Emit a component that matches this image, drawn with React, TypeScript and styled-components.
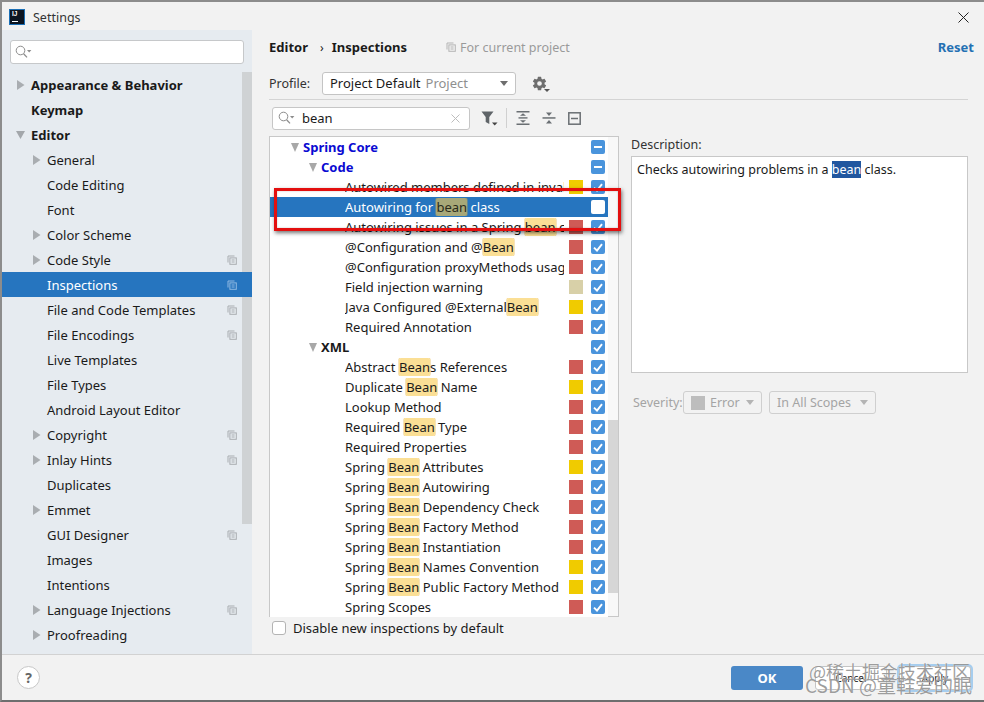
import React from "react";
import styled, { createGlobalStyle } from "styled-components";
import { IoSettingsSharp } from "react-icons/io5";

const GlobalStyle = createGlobalStyle`
  html, body {
    margin: 0;
    padding: 0;
    background: #f2f2f2;
  }
  * {
    box-sizing: border-box;
  }
`;

const Window = styled.div`
  position: relative;
  width: 984px;
  height: 702px;
  display: flex;
  flex-direction: column;
  overflow: hidden;
  background: #f2f2f2;
  border-top: 2px solid #8c8c8c;
  border-left: 2px solid #8c8c8c;
  border-bottom: 2px solid #6e6e6e;
  font-family: "Noto Sans", "Open Sans", sans-serif;
  font-size: 13px;
  color: #1a1a1a;
`;

const TitleBar = styled.div`
  height: 28px;
  flex: none;
  display: flex;
  align-items: center;
  padding: 2px 15px 0 7px;
  gap: 8px;
  font-size: 12.5px;
  color: #333;
`;

const Logo = styled.div`
  width: 16px;
  height: 16px;
  background: #0d1520;
  border: 1px solid #1c6fb5;
  color: #fff;
  font-family: "Liberation Sans", sans-serif;
  font-size: 6.5px;
  font-weight: 700;
  line-height: 8px;
  padding-left: 2px;
  position: relative;
  &::after {
    content: "";
    position: absolute;
    left: 2px;
    bottom: 2px;
    width: 6px;
    height: 1px;
    background: #fff;
  }
`;

const TitleText = styled.span`
  flex: 1;
`;

const Body = styled.div`
  flex: 1;
  display: flex;
  min-height: 0;
`;

const Sidebar = styled.aside`
  position: relative;
  width: 250px;
  flex: none;
  background: #e6ebf0;
  padding-top: 10px;
`;

const SidebarSearch = styled.div`
  height: 24px;
  margin: 0 8px 8px;
  background: #fff;
  border: 1px solid #c6c8ca;
  border-radius: 3px;
  display: flex;
  align-items: center;
  padding-left: 4px;
`;

const SidebarThumb = styled.div`
  position: absolute;
  top: 42px;
  right: 0;
  width: 10px;
  height: 452px;
  background: #cfd2d4;
`;

const NavRow = styled.div<{ $depth: number; $selected?: boolean; $bold?: boolean }>`
  position: relative;
  z-index: 1;
  height: 25px;
  display: flex;
  align-items: center;
  padding-left: ${(p) => (p.$depth === 0 ? 14 : 30)}px;
  padding-right: 15px;
  font-weight: ${(p) => (p.$bold ? 700 : 400)};
  background: ${(p) => (p.$selected ? "#2675bf" : "transparent")};
  color: ${(p) => (p.$selected ? "#fff" : "#1a1a1a")};
`;

const ArrowSlot = styled.span`
  width: 15px;
  flex: none;
  display: flex;
  align-items: center;
`;

const NavLabel = styled.span`
  flex: 1;
  white-space: nowrap;
`;

const Main = styled.main`
  flex: 1;
  min-width: 0;
  padding: 0 10px 0 17px;
  display: flex;
  flex-direction: column;
`;

const Header = styled.div`
  height: 34px;
  flex: none;
  display: flex;
  align-items: center;
  font-weight: 700;
  font-size: 13px;
`;

const Crumb = styled.span`
  margin: 0 8px 0 12px;
  font-weight: 400;
  font-size: 12px;
`;

const Scope = styled.span`
  display: flex;
  align-items: center;
  gap: 4px;
  margin-left: 39px;
  font-weight: 400;
  color: #9a9a9a;
  font-size: 12.5px;
`;

const Reset = styled.a`
  margin-left: auto;
  color: #2470b3;
`;

const ProfileRow = styled.div`
  height: 36px;
  flex: none;
  margin-right: 6px;
  padding-top: 3px;
  display: flex;
  align-items: center;
  border-bottom: 1px solid #d4d4d4;
`;

const ProfileLabel = styled.span`
  width: 53px;
  color: #333;
  font-size: 12.5px;
`;

const Combo = styled.div<{ $width: number; $disabled?: boolean }>`
  width: ${(p) => p.$width}px;
  height: 23px;
  display: flex;
  align-items: center;
  padding: 0 7px;
  gap: 5px;
  background: ${(p) => (p.$disabled ? "transparent" : "#fff")};
  border: 1px solid ${(p) => (p.$disabled ? "#cfcfcf" : "#c4c4c4")};
  border-radius: 3px;
  color: ${(p) => (p.$disabled ? "#a4a4a4" : "#1a1a1a")};
  white-space: nowrap;
`;

const ComboHint = styled.span`
  color: #8f8f8f;
`;

const ComboCaret = styled.span<{ $disabled?: boolean }>`
  margin-left: auto;
  width: 0;
  height: 0;
  border-left: 4.5px solid transparent;
  border-right: 4.5px solid transparent;
  border-top: 5px solid ${(p) => (p.$disabled ? "#b4b4b4" : "#6e6e6e")};
`;

const GearButton = styled.span`
  position: relative;
  margin-left: 16px;
  display: flex;
  color: #6e6e6e;
  &::after {
    content: "";
    position: absolute;
    right: -3px;
    bottom: -1px;
    border-left: 3px solid transparent;
    border-right: 3px solid transparent;
    border-top: 3px solid #555;
  }
`;

const Toolbar = styled.div`
  height: 36px;
  flex: none;
  display: flex;
  align-items: center;
  padding-left: 3px;
`;

const FilterInput = styled.div`
  width: 198px;
  height: 23px;
  display: flex;
  align-items: center;
  padding: 0 9px 0 5px;
  background: #fff;
  border: 1px solid #c6c6c6;
  border-radius: 3px;
`;

const FilterValue = styled.span`
  flex: 1;
  margin-left: 7px;
`;

const ToolIcon = styled.span<{ $gap: number }>`
  position: relative;
  display: flex;
  margin-left: ${(p) => p.$gap}px;
`;

const ToolSeparator = styled.span`
  width: 1px;
  height: 20px;
  margin-left: 8px;
  background: #d0d0d0;
`;

const Panels = styled.div`
  display: flex;
  gap: 12px;
`;

const TreePanel = styled.div`
  position: relative;
  width: 350px;
  height: 481px;
  flex: none;
  background: #f8f8f8;
  border: 1px solid #c8c8c8;
  border-bottom-width: 1px;
  border-right-width: 1px;
`;

const TreeThumb = styled.div`
  position: absolute;
  top: 283px;
  right: 0;
  width: 10px;
  height: 173px;
  background: #d6d6d6;
`;

const TreeRows = styled.div`
  width: 338px;
  background: #fff;
`;

const TreeRow = styled.div<{ $indent: number; $selected?: boolean }>`
  height: 20px;
  display: flex;
  align-items: center;
  padding: 0 3px 0 ${(p) => p.$indent}px;
  background: ${(p) => (p.$selected ? "#2675bf" : "transparent")};
  color: ${(p) => (p.$selected ? "#fff" : "#1a1a1a")};
`;

const TreeArrow = styled.span<{ $small?: boolean }>`
  width: 0;
  height: 0;
  flex: none;
  margin-right: 4px;
  border-left: 4.5px solid transparent;
  border-right: 4.5px solid transparent;
  border-top: 9px solid #a8a8a8;
`;

const TreeText = styled.span<{ $tone?: "group" | "blue" }>`
  flex: 1;
  min-width: 0;
  overflow: hidden;
  white-space: nowrap;
  font-weight: ${(p) => (p.$tone ? 700 : 400)};
  color: ${(p) => (p.$tone === "blue" ? "#0a0ad2" : "inherit")};
`;

const Match = styled.span<{ $selected?: boolean }>`
  background: ${(p) => (p.$selected ? "#a8a878" : "#fbdf95")};
  color: ${(p) => (p.$selected ? "#2a2a1a" : "inherit")};
  border-radius: 2px;
  box-shadow: 0 0 0 0.5px ${(p) => (p.$selected ? "#9a9a70" : "#edc878")};
`;

const Swatch = styled.span<{ $color?: string }>`
  width: 14px;
  height: 14px;
  flex: none;
  margin-left: 5px;
  background: ${(p) => p.$color || "transparent"};
`;

const Check = styled.span<{ $state: "on" | "off" | "mixed" }>`
  width: 14px;
  height: 14px;
  flex: none;
  margin-left: 8px;
  display: flex;
  align-items: center;
  justify-content: center;
  border-radius: 2px;
  background: ${(p) => (p.$state === "off" ? "#fff" : "#4a94dc")};
`;

const DescColumn = styled.div`
  flex: 1;
  min-width: 0;
  margin-right: 6px;
`;

const DescLabel = styled.div`
  height: 20px;
  line-height: 18px;
  font-size: 12.5px;
  color: #333;
`;

const DescBox = styled.div`
  height: 217px;
  padding: 4px 5px;
  background: #fff;
  border: 1px solid #c8c8c8;
  font-size: 12.5px;
`;

const DescMatch = styled.span`
  background: #21579f;
  color: #fff;
`;

const SeverityRow = styled.div`
  margin-top: 18px;
  display: flex;
  align-items: center;
  color: #a4a4a4;
  font-size: 12.5px;
`;

const SeverityLabel = styled.span`
  width: 52px;
  padding-left: 2px;
`;

const SeverityCombos = styled.div`
  display: flex;
  gap: 7px;
`;

const GreySwatch = styled.span`
  width: 14px;
  height: 14px;
  background: #bdbdbd;
`;

const NewInspections = styled.label`
  height: 22px;
  margin-top: 0;
  padding: 0 0 0 3px;
  display: flex;
  align-items: center;
  gap: 7px;
  transform: none;
`;

const EmptyBox = styled.span`
  width: 14px;
  height: 14px;
  background: #fff;
  border: 1px solid #b4b4b4;
  border-radius: 3px;
`;

const Footer = styled.footer`
  height: 46px;
  flex: none;
  display: flex;
  align-items: center;
  padding: 0 13px 0 15px;
  border-top: 1px solid #d2d2d2;
`;

const HelpButton = styled.span`
  width: 23px;
  height: 23px;
  display: flex;
  align-items: center;
  justify-content: center;
  background: #fff;
  border: 1px solid #c8c8c8;
  border-radius: 50%;
  color: #666;
  font-weight: 700;
  font-size: 14px;
`;

const FooterButtons = styled.div`
  margin-left: auto;
  display: flex;
  align-items: center;
  gap: 12px;
`;

const DialogButton = styled.button<{ $kind?: "primary" | "focus" }>`
  width: 72px;
  height: 24px;
  padding: 0;
  font: inherit;
  font-size: ${(p) => (p.$kind === "primary" ? "13px" : "10px")};
  font-weight: ${(p) => (p.$kind === "primary" ? 700 : 400)};
  color: ${(p) => (p.$kind === "primary" ? "#fff" : "#222")};
  background: ${(p) => (p.$kind === "primary" ? "#4a88c7" : "#fff")};
  border: ${(p) => (p.$kind === "primary" ? "0" : "1px solid #c4c4c4")};
  border-radius: 3px;
  box-shadow: ${(p) => (p.$kind === "focus" ? "0 0 0 2px #a6cdee" : "none")};
`;

const Callout = styled.div`
  position: absolute;
  left: 272px;
  top: 186px;
  width: 347px;
  height: 43px;
  border: 3px solid #e30f0f;
  box-shadow: 1px 2px 4px rgba(0, 0, 0, 0.55), inset 0 0 2px rgba(0, 0, 0, 0.25);
  pointer-events: none;
`;

const Watermark = styled.div<{ $bottom: number; $right: number; $size: number }>`
  position: absolute;
  right: ${(p) => p.$right}px;
  bottom: ${(p) => p.$bottom}px;
  font-family: "Noto Sans CJK SC", "Noto Sans", sans-serif;
  font-size: ${(p) => p.$size}px;
  line-height: 1;
  white-space: nowrap;
  color: rgba(120, 120, 120, 0.72);
  text-shadow: 0 0 1px rgba(255, 255, 255, 0.9);
  pointer-events: none;
`;

const SearchGlyph = () => (
  <svg width="17" height="14" viewBox="0 0 17 14" fill="none">
    <circle cx="5.5" cy="5.5" r="4.3" stroke="#8c8c8c" strokeWidth="1" />
    <path d="M8.6 8.8L12 12.4" stroke="#8c8c8c" strokeWidth="1.3" />
    <path d="M12 5h4.4l-2.2 2.4z" fill="#8c8c8c" />
  </svg>
);

const CopyGlyph = ({ color = "#a9adb1" }: { color?: string }) => (
  <svg width="10" height="10" viewBox="0 0 10 10" fill="none" stroke={color} strokeWidth="1">
    <path d="M1 7.5V1h6.5" />
    <rect x="2.9" y="2.9" width="6.4" height="6.4" />
    <path d="M4.6 5h3M4.6 7h3" />
  </svg>
);

const NavArrow = ({ open }: { open?: boolean }) => (
  <svg width="9" height="10" viewBox="0 0 9 10">
    {open ? <path d="M0 1h9L4.5 9z" fill="#a3a7ab" /> : <path d="M1 0l7.5 5L1 10z" fill="#a9adb1" />}
  </svg>
);

const CheckMark = () => (
  <svg width="10" height="9" viewBox="0 0 10 9" fill="none">
    <path d="M1 4.6l3 3L9 1.2" stroke="#fff" strokeWidth="1.9" />
  </svg>
);

const MixedMark = () => (
  <svg width="8" height="2" viewBox="0 0 8 2">
    <rect width="8" height="2" fill="#fff" />
  </svg>
);

type NavItem = {
  label: string;
  depth: number;
  arrow?: "open" | "closed";
  bold?: boolean;
  copy?: boolean;
  selected?: boolean;
};

const navItems: NavItem[] = [
  { label: "Appearance & Behavior", depth: 0, arrow: "closed", bold: true },
  { label: "Keymap", depth: 0, bold: true },
  { label: "Editor", depth: 0, arrow: "open", bold: true },
  { label: "General", depth: 1, arrow: "closed" },
  { label: "Code Editing", depth: 1 },
  { label: "Font", depth: 1 },
  { label: "Color Scheme", depth: 1, arrow: "closed" },
  { label: "Code Style", depth: 1, arrow: "closed", copy: true },
  { label: "Inspections", depth: 1, copy: true, selected: true },
  { label: "File and Code Templates", depth: 1, copy: true },
  { label: "File Encodings", depth: 1, copy: true },
  { label: "Live Templates", depth: 1 },
  { label: "File Types", depth: 1 },
  { label: "Android Layout Editor", depth: 1 },
  { label: "Copyright", depth: 1, arrow: "closed", copy: true },
  { label: "Inlay Hints", depth: 1, arrow: "closed", copy: true },
  { label: "Duplicates", depth: 1 },
  { label: "Emmet", depth: 1, arrow: "closed" },
  { label: "GUI Designer", depth: 1, copy: true },
  { label: "Images", depth: 1 },
  { label: "Intentions", depth: 1 },
  { label: "Language Injections", depth: 1, arrow: "closed", copy: true },
  { label: "Proofreading", depth: 1, arrow: "closed" },
];

const RED = "#cf5b56";
const YELLOW = "#f0cb00";
const TAN = "#d8d0a8";

type TreeItem = {
  label: string;
  indent: number;
  arrow?: boolean;
  tone?: "group" | "blue";
  severity?: string;
  check?: "on" | "off" | "mixed";
  selected?: boolean;
};

const treeItems: TreeItem[] = [
  { label: "Spring Core", indent: 21, arrow: true, tone: "blue", check: "mixed" },
  { label: "Code", indent: 39, arrow: true, tone: "blue", check: "mixed" },
  { label: "Autowired members defined in invalid Spring bean", indent: 75, severity: YELLOW },
  { label: "Autowiring for bean class", indent: 75, check: "off", selected: true },
  { label: "Autowiring issues in a Spring bean class", indent: 75, severity: RED },
  { label: "@Configuration and @Bean", indent: 75, severity: RED },
  { label: "@Configuration proxyMethods usage", indent: 75, severity: RED },
  { label: "Field injection warning", indent: 75, severity: TAN },
  { label: "Java Configured @ExternalBean", indent: 75, severity: YELLOW },
  { label: "Required Annotation", indent: 75, severity: RED },
  { label: "XML", indent: 39, arrow: true, tone: "group" },
  { label: "Abstract Beans References", indent: 75, severity: RED },
  { label: "Duplicate Bean Name", indent: 75, severity: YELLOW },
  { label: "Lookup Method", indent: 75, severity: RED },
  { label: "Required Bean Type", indent: 75, severity: RED },
  { label: "Required Properties", indent: 75, severity: RED },
  { label: "Spring Bean Attributes", indent: 75, severity: YELLOW },
  { label: "Spring Bean Autowiring", indent: 75, severity: RED },
  { label: "Spring Bean Dependency Check", indent: 75, severity: RED },
  { label: "Spring Bean Factory Method", indent: 75, severity: RED },
  { label: "Spring Bean Instantiation", indent: 75, severity: RED },
  { label: "Spring Bean Names Convention", indent: 75, severity: YELLOW },
  { label: "Spring Bean Public Factory Method", indent: 75, severity: YELLOW },
  { label: "Spring Scopes", indent: 75, severity: RED },
];

const highlight = (label: string, selected?: boolean) =>
  label.split(/(bean)/i).map((part, i) =>
    /^bean$/i.test(part) ? (
      <Match key={i} $selected={selected}>
        {part}
      </Match>
    ) : (
      part
    )
  );

const App: React.FC = () => {
  return (
    <Window>
      <GlobalStyle />
      <TitleBar>
        <Logo>IJ</Logo>
        <TitleText>Settings</TitleText>
        <svg width="11" height="11" viewBox="0 0 11 11" stroke="#222" strokeWidth="1">
          <path d="M0.5 0.5l10 10M10.5 0.5l-10 10" />
        </svg>
      </TitleBar>
      <Body>
        <Sidebar>
          <SidebarSearch>
            <SearchGlyph />
          </SidebarSearch>
          <SidebarThumb />
          {navItems.map((item) => (
            <NavRow key={item.label} $depth={item.depth} $selected={item.selected} $bold={item.bold}>
              <ArrowSlot>{item.arrow && <NavArrow open={item.arrow === "open"} />}</ArrowSlot>
              <NavLabel>{item.label}</NavLabel>
              {item.copy && <CopyGlyph color={item.selected ? "#8fb9e2" : undefined} />}
            </NavRow>
          ))}
        </Sidebar>
        <Main>
          <Header>
            Editor
            <Crumb>›</Crumb>
            Inspections
            <Scope>
              <CopyGlyph color="#b4b4b4" />
              For current project
            </Scope>
            <Reset>Reset</Reset>
          </Header>
          <ProfileRow>
            <ProfileLabel>Profile:</ProfileLabel>
            <Combo $width={194}>
              Project Default <ComboHint>Project</ComboHint>
              <ComboCaret />
            </Combo>
            <GearButton>
              <IoSettingsSharp size={15} />
            </GearButton>
          </ProfileRow>
          <Toolbar>
            <FilterInput>
              <SearchGlyph />
              <FilterValue>bean</FilterValue>
              <svg width="9" height="9" viewBox="0 0 9 9" stroke="#bdbdbd" strokeWidth="1">
                <path d="M0.5 0.5l8 8M8.5 0.5l-8 8" />
              </svg>
            </FilterInput>
            <ToolIcon $gap={11}>
              <svg width="17" height="16" viewBox="0 0 17 16">
                <path d="M0.5 1.5h12L8.3 7v7l-3.6-2V7z" fill="#5f6468" />
                <path d="M11 12.5h5.5L13.7 15.5z" fill="#444" />
              </svg>
            </ToolIcon>
            <ToolSeparator />
            <ToolIcon $gap={9}>
              <svg width="14" height="14" viewBox="0 0 14 14" fill="#6a6f73">
                <rect x="0.5" y="0" width="13" height="1.5" />
                <rect x="0.5" y="12.5" width="13" height="1.5" />
                <rect x="2.5" y="6.2" width="9" height="1.4" />
                <path d="M7 2.2l3 2.6H4zM7 11.8l3-2.6H4z" />
              </svg>
            </ToolIcon>
            <ToolIcon $gap={12}>
              <svg width="14" height="14" viewBox="0 0 14 14" fill="#6a6f73">
                <rect x="0.5" y="6.2" width="13" height="1.5" />
                <path d="M7 5l3-3.4H4zM7 9l3 3.4H4z" />
              </svg>
            </ToolIcon>
            <ToolIcon $gap={12}>
              <svg width="13" height="13" viewBox="0 0 13 13" fill="none" stroke="#6a6f73" strokeWidth="1.5">
                <rect x="0.8" y="0.8" width="11.4" height="11.4" />
                <path d="M3 6.5h7" />
              </svg>
            </ToolIcon>
          </Toolbar>
          <Panels>
            <div>
              <TreePanel>
                <TreeThumb />
                <TreeRows>
                  {treeItems.map((item) => (
                    <TreeRow key={item.label} $indent={item.indent} $selected={item.selected}>
                      {item.arrow && <TreeArrow />}
                      <TreeText $tone={item.tone}>{highlight(item.label, item.selected)}</TreeText>
                      <Swatch $color={item.severity} />
                      <Check $state={item.check || "on"}>
                        {(item.check || "on") === "on" && <CheckMark />}
                        {item.check === "mixed" && <MixedMark />}
                      </Check>
                    </TreeRow>
                  ))}
                </TreeRows>
              </TreePanel>
              <NewInspections>
                <EmptyBox />
                Disable new inspections by default
              </NewInspections>
            </div>
            <DescColumn>
              <DescLabel>Description:</DescLabel>
              <DescBox>
                Checks autowiring problems in a <DescMatch>bean</DescMatch> class.
              </DescBox>
              <SeverityRow>
                <SeverityLabel>Severity:</SeverityLabel>
                <SeverityCombos>
                  <Combo $width={79} $disabled>
                    <GreySwatch />
                    Error
                    <ComboCaret $disabled />
                  </Combo>
                  <Combo $width={107} $disabled>
                    In All Scopes
                    <ComboCaret $disabled />
                  </Combo>
                </SeverityCombos>
              </SeverityRow>
            </DescColumn>
          </Panels>
        </Main>
      </Body>
      <Footer>
        <HelpButton>?</HelpButton>
        <FooterButtons>
          <DialogButton $kind="primary">OK</DialogButton>
          <DialogButton>Cancel</DialogButton>
          <DialogButton $kind="focus">Apply</DialogButton>
        </FooterButtons>
      </Footer>
      <Callout />
      <Watermark $right={14} $bottom={20} $size={18}>
        @稀土掘金技术社区
      </Watermark>
      <Watermark $right={12} $bottom={6} $size={19}>
        CSDN @童鞋爱的眠
      </Watermark>
    </Window>
  );
};

export default App;
